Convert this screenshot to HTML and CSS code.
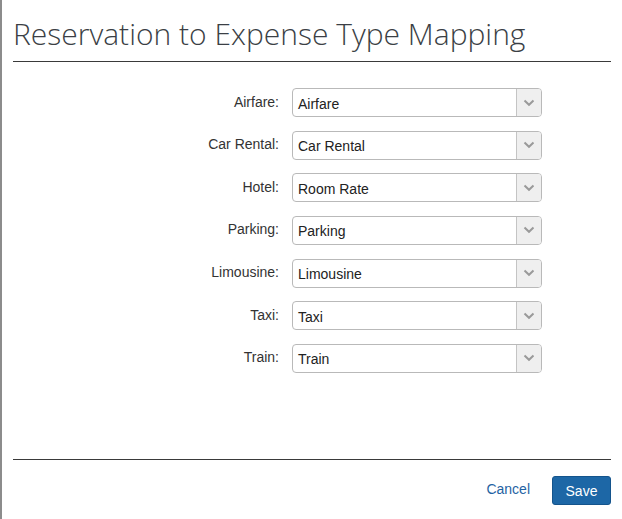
FILE: index.html
```html
<!DOCTYPE html>
<html>
<head>
<meta charset="utf-8">
<link rel="stylesheet" href="styles.css">
</head>
<body>
<div class="dialog">
  <h1 class="title">Reservation to Expense Type Mapping</h1>
  <div class="form">
    <label class="lbl">Airfare:</label>
    <div class="select"><span class="val">Airfare</span><span class="arrow"><svg width="12" height="8" viewBox="0 0 12 8"><path d="M1.5 1.5 L6 5.8 L10.5 1.5" fill="none" stroke="#9a9a9a" stroke-width="2"/></svg></span></div>
    <label class="lbl">Car Rental:</label>
    <div class="select"><span class="val">Car Rental</span><span class="arrow"><svg width="12" height="8" viewBox="0 0 12 8"><path d="M1.5 1.5 L6 5.8 L10.5 1.5" fill="none" stroke="#9a9a9a" stroke-width="2"/></svg></span></div>
    <label class="lbl">Hotel:</label>
    <div class="select"><span class="val">Room Rate</span><span class="arrow"><svg width="12" height="8" viewBox="0 0 12 8"><path d="M1.5 1.5 L6 5.8 L10.5 1.5" fill="none" stroke="#9a9a9a" stroke-width="2"/></svg></span></div>
    <label class="lbl">Parking:</label>
    <div class="select"><span class="val">Parking</span><span class="arrow"><svg width="12" height="8" viewBox="0 0 12 8"><path d="M1.5 1.5 L6 5.8 L10.5 1.5" fill="none" stroke="#9a9a9a" stroke-width="2"/></svg></span></div>
    <label class="lbl">Limousine:</label>
    <div class="select"><span class="val">Limousine</span><span class="arrow"><svg width="12" height="8" viewBox="0 0 12 8"><path d="M1.5 1.5 L6 5.8 L10.5 1.5" fill="none" stroke="#9a9a9a" stroke-width="2"/></svg></span></div>
    <label class="lbl">Taxi:</label>
    <div class="select"><span class="val">Taxi</span><span class="arrow"><svg width="12" height="8" viewBox="0 0 12 8"><path d="M1.5 1.5 L6 5.8 L10.5 1.5" fill="none" stroke="#9a9a9a" stroke-width="2"/></svg></span></div>
    <label class="lbl">Train:</label>
    <div class="select"><span class="val">Train</span><span class="arrow"><svg width="12" height="8" viewBox="0 0 12 8"><path d="M1.5 1.5 L6 5.8 L10.5 1.5" fill="none" stroke="#9a9a9a" stroke-width="2"/></svg></span></div>
  </div>
  <div class="footer">
    <a class="cancel">Cancel</a>
    <button class="save">Save</button>
  </div>
</div>
</body>
</html>
```
FILE: styles.css
```css
html, body {
  margin: 0;
  padding: 0;
  background: #fff;
}
body {
  width: 622px;
  height: 519px;
  box-sizing: border-box;
  border-left: 2px solid #8c8c8c;
  font-family: "Liberation Sans", Arial, sans-serif;
  color: #333;
}
.dialog {
  padding: 0 11px 0 11px;
  height: 519px;
  box-sizing: border-box;
  display: flex;
  flex-direction: column;
}
.title {
  margin: 0;
  padding: 16px 0 9px 0;
  font-family: "Open Sans", sans-serif;
  font-weight: 300;
  font-size: 30px;
  line-height: 36px;
  color: #3b3f45;
  border-bottom: 1px solid #3a3a3a;
  letter-spacing: 0;
}
.form {
  display: grid;
  grid-template-columns: 266px 250px;
  column-gap: 13px;
  row-gap: 13.67px;
  align-items: center;
  padding-top: 26px;
  flex: 1;
  align-content: start;
}
.lbl {
  text-align: right;
  font-size: 14px;
  color: #333;
  position: relative;
  top: -1px;
}
.select {
  height: 29px;
  box-sizing: border-box;
  border: 1px solid #b9b9b9;
  border-radius: 4px;
  display: flex;
  align-items: stretch;
  background: #fff;
  overflow: hidden;
}
.val {
  flex: 1;
  display: flex;
  align-items: center;
  padding-left: 5px;
  padding-top: 2px;
  font-size: 14px;
  color: #222;
}
.arrow {
  width: 24px;
  border-left: 1px solid #c4c4c4;
  background: #efefef;
  display: flex;
  align-items: center;
  justify-content: center;
}
.footer {
  border-top: 1px solid #3a3a3a;
  display: flex;
  justify-content: flex-end;
  align-items: center;
  gap: 22px;
  padding: 16px 0 14px 0;
}
.cancel {
  color: #1f63a3;
  font-size: 14px;
  text-decoration: none;
  margin-bottom: 4px;
}
.save {
  width: 59px;
  height: 29px;
  background: #1d67a6;
  border: 1px solid #14548c;
  border-radius: 3px;
  color: #fff;
  font-family: "Liberation Sans", Arial, sans-serif;
  font-size: 14px;
  padding: 0;
}
```
